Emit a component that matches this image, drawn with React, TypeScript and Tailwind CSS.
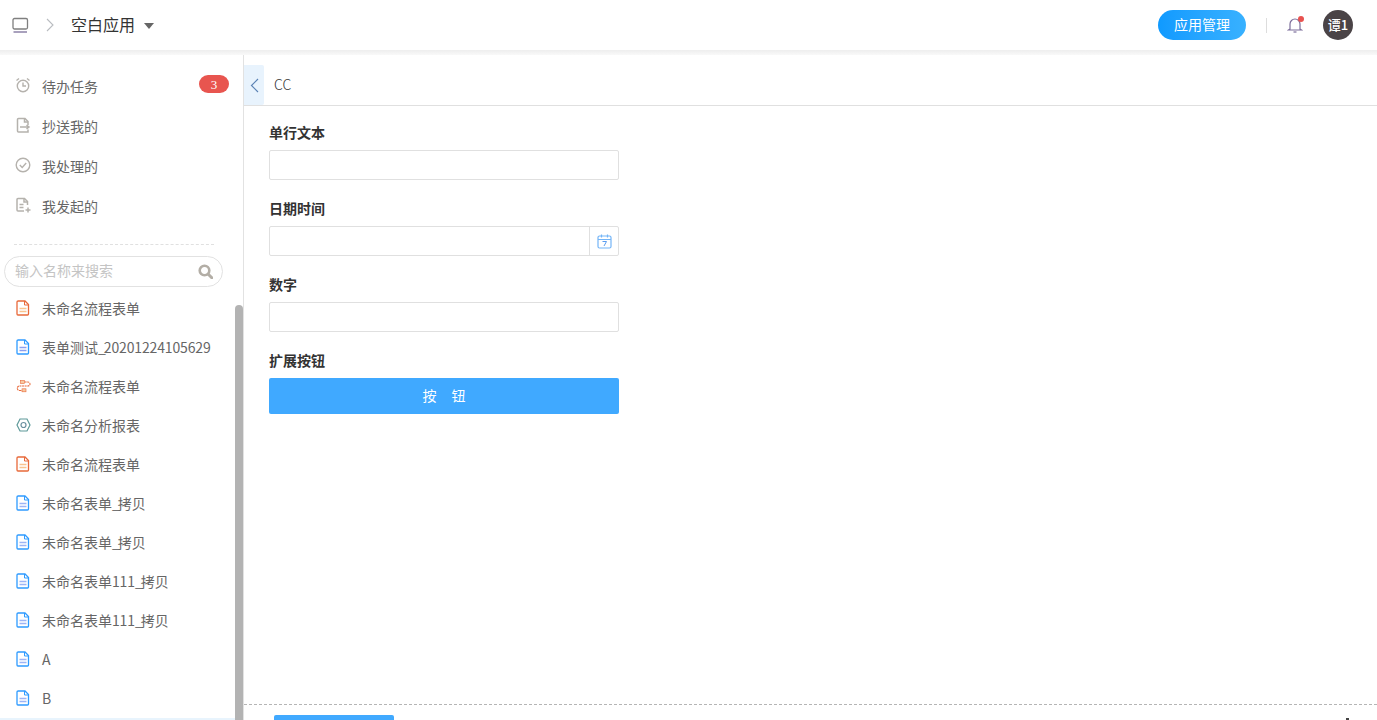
import React from "react";

const font = { fontFamily: '"Noto Sans CJK SC", sans-serif' };

function FileIcon({ color, line }: { color: string; line: string }) {
  return (
    <svg width="14" height="16" viewBox="0 0 14 16" fill="none" className="shrink-0">
      <path d="M1.5 1H9L12.5 4.500V14a1 1 0 0 1-1 1h-9.500a1 1 0 0 1-1-1V2a1 1 0 0 1 1-1Z" stroke={color} strokeWidth="1.300" />
      <path d="M8.500 1v4h4" stroke={color} strokeWidth="1" />
      <path d="M3.500 8.500h7M3.500 11.500h7" stroke={line} strokeWidth="1.500" />
    </svg>
  );
}

function FlowIcon() {
  return (
    <svg width="15" height="14" viewBox="0 0 15 14" fill="none" className="shrink-0">
      <path d="M6 3h6a1.800 1.800 0 0 1 0 4H3.500a2.200 2.200 0 0 0 0 4.500H7" stroke="#e8693a" strokeWidth="1.100" strokeDasharray="2 0.600" />
      <rect x="4.500" y="1.500" width="4" height="3" fill="#f8c9a0" stroke="#e8693a" strokeWidth="0.600" />
      <rect x="6" y="9.800" width="4" height="3" fill="#f8c9a0" stroke="#e8693a" strokeWidth="0.600" />
    </svg>
  );
}

function ReportIcon() {
  return (
    <svg width="15" height="14" viewBox="0 0 15 14" fill="none" className="shrink-0">
      <path d="M4 1h7l3 6-3 6H4L1 7Z" stroke="#5f9a9a" strokeWidth="1.200" />
      <circle cx="7.500" cy="7" r="2.500" stroke="#6a8f9f" strokeWidth="1.200" />
    </svg>
  );
}

const blue = <FileIcon color="#2f9bff" line="#9db4f5" />;
const orange = <FileIcon color="#e8693a" line="#f9c48f" />;

const items: [React.ReactNode, string][] = [
  [orange, "未命名流程表单"],
  [<FileIcon color="#2f9bff" line="#8b9ff0" />, "表单测试_20201224105629"],
  [<FlowIcon />, "未命名流程表单"],
  [<ReportIcon />, "未命名分析报表"],
  [orange, "未命名流程表单"],
  [blue, "未命名表单_拷贝"],
  [blue, "未命名表单_拷贝"],
  [blue, "未命名表单111_拷贝"],
  [blue, "未命名表单111_拷贝"],
  [blue, "A"],
  [blue, "B"],
];

const tasks: [React.ReactNode, string][] = [
  [
    <svg width="16" height="16" viewBox="0 0 16 16" fill="none" stroke="#b5b2ad" strokeWidth="1.400">
      <circle cx="8" cy="9" r="5.700" />
      <path d="M8 5.500V9h3M1.500 3.500 4 1.500M14.500 3.500 12 1.500" />
    </svg>,
    "待办任务",
  ],
  [
    <svg width="16" height="16" viewBox="0 0 16 16" fill="none" stroke="#b5b2ad" strokeWidth="1.500">
      <path d="M13 8V4.500L10 1.500H3.500a1 1 0 0 0-1 1V14a1 1 0 0 0 1 1H13v-2.500" />
      <path d="M9.500 1.500V5H13M5 10h9M11.500 8l2.500 2-2.500 2" />
    </svg>,
    "抄送我的",
  ],
  [
    <svg width="16" height="16" viewBox="0 0 16 16" fill="none" stroke="#b5b2ad" strokeWidth="1.400">
      <circle cx="8" cy="8" r="6.800" />
      <path d="m4.800 8 2.400 2.400 4-4.300" />
    </svg>,
    "我处理的",
  ],
  [
    <svg width="16" height="16" viewBox="0 0 16 16" fill="none" stroke="#b5b2ad" strokeWidth="1.500">
      <path d="M12.500 8V4.500L9.500 1.500H3a1 1 0 0 0-1 1V13a1 1 0 0 0 1 1h6" />
      <path d="M9 1.500V5h3.500M4.500 7.500h4M4.500 10.500h4M13 10.500v5M10.500 13h5" />
    </svg>,
    "我发起的",
  ],
];

function Label({ text }: { text: string }) {
  return (
    <>
      {text.split(/(_|\d+)/).map((part, i) =>
        part === "_" ? (
          <span key={i} className="tracking-[-2px]">_</span>
        ) : /^\d/.test(part) ? (
          <span key={i} className="tracking-[-0.150px]">{part}</span>
        ) : (
          <span key={i}>{part}</span>
        )
      )}
    </>
  );
}

function Field({ label, children }: { label: string; children: React.ReactNode }) {
  return (
    <div className="h-[76px] flex flex-col">
      <div className="h-[20px] leading-[20px] text-[14px] font-bold text-[#333] mt-[6px] mb-[8px]">{label}</div>
      {children}
    </div>
  );
}

export default function App() {
  return (
    <div className="w-[1377px] h-[720px] overflow-hidden bg-white flex flex-col" style={font}>
      <header className="h-[50px] shrink-0 bg-white flex items-center pl-[12px] pr-[24px]">
        <svg width="17" height="17" viewBox="0 0 17 17" fill="none">
          <rect x="1" y="1.500" width="14.500" height="10.500" rx="1.500" stroke="#7f7f7f" strokeWidth="1.300" />
          <path d="M1.500 15h13.500" stroke="#7a6f9a" strokeWidth="1.300" />
        </svg>
        <svg width="8" height="14" viewBox="0 0 8 14" fill="none" className="ml-[17px]">
          <path d="m1 1 6 6-6 6" stroke="#b9bcc0" strokeWidth="1.100" />
        </svg>
        <span className="ml-[17px] text-[16px] text-[#333] -mt-[2px]">空白应用</span>
        <span className="ml-[9px] mt-[1px] w-0 h-0 border-x-[5px] border-x-transparent border-t-[6px] border-t-[#666]" />
        <div className="flex-1" />
        <button className="w-[88px] h-[30px] rounded-full text-white text-[14px] pb-[2px] bg-gradient-to-r from-[#0f9aff] to-[#38b1ff]">应用管理</button>
        <div className="ml-[20px] w-px h-[15px] bg-[#ddd]" />
        <div className="ml-[20px] relative w-[16px] h-[18px]">
          <svg width="16" height="18" viewBox="0 0 16 18" fill="none">
            <path d="M3 13V8a5 5 0 0 1 10 0v5l1.500 1h-13Z" stroke="#7d6f9c" strokeWidth="1.200" />
            <path d="M6.500 16h3" stroke="#7d6f9c" strokeWidth="1.200" />
          </svg>
          <span className="absolute right-[-1px] top-[0px] w-[6px] h-[6px] rounded-full bg-[#e8524f]" />
        </div>
        <div className="ml-[20px] w-[30px] h-[30px] rounded-full bg-[#4a4346] text-white text-[13px] font-medium flex items-center justify-center">谭1</div>
      </header>
      <div className="h-[5px] shrink-0 bg-gradient-to-b from-[#eeeeee] to-[#f9f9f9]" />

      <div className="flex-1 flex min-h-0">
        <aside className="w-[244px] shrink-0 border-r border-[#e2e2e2] flex flex-col pt-[12px] relative overflow-hidden">
          {tasks.map(([icon, label], i) => (
            <div key={label} className="h-[40px] shrink-0 flex items-center pl-[15px] relative">
              <span className="w-[16px] h-[16px] -mt-[4px] flex items-center">{icon}</span>
              <span className="ml-[11px] text-[14px] text-[#666] -mt-[1px]">{label}</span>
              {i === 0 && (
                <span className="absolute left-[199px] top-[8px] w-[30px] h-[18px] rounded-full bg-[#e8554f] text-white text-[13px] leading-[19px] text-center" style={{ fontFamily: '"Liberation Serif", serif' }}>
                  3
                </span>
              )}
            </div>
          ))}
          <div className="mt-[17px] ml-[14px] w-[200px] border-t border-dashed border-[#e0e0e0] shrink-0" />
          <div className="mt-[11px] ml-[4px] w-[219px] h-[31px] shrink-0 rounded-full border border-[#e2e2e2] flex items-center pl-[10px] pr-[9px]">
            <span className="flex-1 text-[14px] text-[#c4c4c4] -mt-[3px]">输入名称来搜索</span>
            <svg width="15" height="15" viewBox="0 0 15 15" fill="none">
              <circle cx="6.500" cy="6.500" r="4.800" stroke="#b3aea6" strokeWidth="2.600" />
              <path d="m10 10 3.800 3.800" stroke="#b3aea6" strokeWidth="3" strokeLinecap="round" />
            </svg>
          </div>
          <div className="mt-[3px] flex flex-col shrink-0">
            {items.map(([icon, label], i) => (
              <div key={i} className="h-[39px] flex items-center pl-[16px]">
                <span className="w-[15px] flex items-center -mt-[3px]">{icon}</span>
                <span className="ml-[11px] text-[14px] text-[#666] -mt-[2px]">
                  <Label text={label} />
                </span>
              </div>
            ))}
            <div className="h-[10px] mr-[8px] -mt-[1px] bg-[#e8f4fd]" />
          </div>
          <div className="absolute right-0 top-[250px] bottom-0 w-[8px] rounded-t-[4px] bg-[#b3b3b3]" />
        </aside>

        <main className="flex-1 min-w-0 flex flex-col">
          <div className="h-[51px] shrink-0 pt-[10px] border-b border-[#e0e0e0] flex items-stretch">
            <div className="w-[20px] h-[40px] bg-[#e8f3fd] rounded-r-[2px] flex items-center pl-[6px]">
              <svg width="9" height="15" viewBox="0 0 9 15" fill="none">
                <path d="M8 1 1.500 7.500 8 14" stroke="#5b83b5" strokeWidth="1.200" />
              </svg>
            </div>
            <span className="ml-[10px] h-[40px] leading-[38px] text-[14px] font-light text-[#333]">CC</span>
          </div>
          <div className="flex-1 min-h-0 pl-[25px] pt-[10px]">
            <div className="w-[350px]">
              <Field label="单行文本">
                <div className="h-[30px] border border-[#e0e0e0] rounded-[2px]" />
              </Field>
              <Field label="日期时间">
                <div className="h-[30px] border border-[#e0e0e0] rounded-[2px] flex justify-end">
                  <div className="w-[29px] h-full border-l border-[#e0e0e0] flex items-center justify-center">
                    <svg width="15" height="15" viewBox="0 0 15 15" fill="none">
                      <rect x="1" y="2" width="13" height="12" rx="1.500" stroke="#74b5f7" strokeWidth="1.200" />
                      <path d="M1 5.500h13M4.500 0.500v3M10.500 0.500v3" stroke="#74b5f7" strokeWidth="1.200" />
                      <path d="M5.500 7.500h4L7 12" stroke="#5b9def" strokeWidth="1" />
                    </svg>
                  </div>
                </div>
              </Field>
              <Field label="数字">
                <div className="h-[30px] border border-[#e0e0e0] rounded-[2px]" />
              </Field>
              <Field label="扩展按钮">
                <button className="h-[36px] w-full shrink-0 bg-[#40a9ff] rounded-[2px] text-white text-[14px] pb-[1px] flex items-center justify-center gap-[15px]">
                  <span>按</span>
                  <span>钮</span>
                </button>
              </Field>
            </div>
          </div>
          <div className="h-[16px] shrink-0 border-t border-dashed border-[#b5b5b5] pl-[30px] pt-[10px] flex justify-between pr-[28px]">
            <div className="w-[120px] h-[6px] bg-[#40a9ff] rounded-t-[2px]" />
            <div className="w-[3px] h-[3px] mt-[3px] bg-[#444]" />
          </div>
        </main>
      </div>
    </div>
  );
}
